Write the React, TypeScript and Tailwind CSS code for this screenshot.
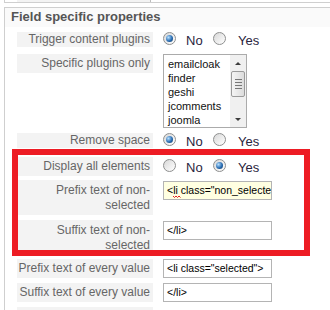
import type { ReactNode } from "react";

function Radio({ checked }: { checked?: boolean }) {
  return (
    <span className="relative inline-flex h-[13px] w-[13px] shrink-0 items-center justify-center rounded-full border border-[#8e8f8f] bg-[linear-gradient(135deg,#d8d8d8,#ffffff)]">
      {checked ? (
        <span className="h-[7px] w-[7px] rounded-full bg-[radial-gradient(circle_at_35%_35%,#b6e0ff,#2a6db3_55%,#0d355f)]" />
      ) : null}
    </span>
  );
}

function RadioPair({ value, bare }: { value: "no" | "yes"; bare?: boolean }) {
  return (
    <div className="flex h-[15px] items-center text-[13px] leading-[15px] text-[#2a2540]">
      <span className="-mt-[3px] flex">
        <Radio checked={value === "no"} />
      </span>
      <span className="ml-[10px] w-[17px] pt-[1px]">{bare ? null : "No"}</span>
      <span className="ml-[10px] -mt-[3px] flex">
        <Radio checked={value === "yes"} />
      </span>
      <span className="ml-[12px] pt-[1px]">{bare ? null : "Yes"}</span>
    </div>
  );
}

function TextBox({ children, focused }: { children: ReactNode; focused?: boolean }) {
  return (
    <div
      className={
        "h-[19px] w-[109px] overflow-hidden whitespace-nowrap border border-[#b4b4b4] pl-[3px] text-[10.5px] leading-[17px] text-black " +
        (focused ? "bg-[#ffffe1]" : "bg-white")
      }
    >
      {children}
    </div>
  );
}

// red spell-check squiggle under a word
function Misspelled({ children }: { children: ReactNode }) {
  return (
    <span className="relative inline-block">
      {children}
      <svg width="8" height="3" viewBox="0 0 8 3" className="absolute left-0 top-[13px]">
        <path d="M0 1 L1.5 2.5 L3 1 L4.5 2.5 L6 1 L7.5 2.5" fill="none" stroke="#e02020" strokeWidth="1" />
      </svg>
    </span>
  );
}

function Row({
  label,
  h,
  mt,
  pt = 0,
  children,
}: {
  label: ReactNode;
  h: number;
  mt: number;
  pt?: number;
  children?: ReactNode;
}) {
  return (
    <div className="flex items-start gap-[10px]" style={{ marginTop: mt }}>
      <div
        className="ml-[12px] w-[136px] shrink-0 bg-[#f3f3f3] pr-[3px] text-right text-[12px] leading-[15px] text-[#666]"
        style={{ height: h, paddingTop: pt }}
      >
        {label}
      </div>
      {children}
    </div>
  );
}

function ListBox() {
  const items = ["emailcloak", "finder", "geshi", "jcomments", "joomla"];
  return (
    <div className="flex h-[74px] w-[84px] border border-[#ababab] bg-white">
      <div className="flex-1 overflow-hidden pl-[4px] pt-[2px] text-[11px] leading-[14px] text-[#111]">
        {items.map((it) => (
          <div key={it}>{it}</div>
        ))}
      </div>
      <div className="flex w-[16px] flex-col items-center bg-[#f0f0f0]">
        <svg width="16" height="16" viewBox="0 0 16 16" className="shrink-0">
          <path d="M5 10 L8 7 L11 10 Z" fill="#3c3c3c" />
        </svg>
        <div className="flex h-[26px] w-[14px] flex-col items-center justify-center gap-[2px] rounded-[2px] border border-[#9a9a9a] bg-[linear-gradient(90deg,#f4f4f4,#dcdcdc)]">
          <span className="h-px w-[7px] bg-[#777]" />
          <span className="h-px w-[7px] bg-[#777]" />
          <span className="h-px w-[7px] bg-[#777]" />
          <span className="h-px w-[7px] bg-[#777]" />
        </div>
        <div className="flex-1" />
        <svg width="16" height="14" viewBox="0 0 16 14" className="shrink-0">
          <path d="M5 5 L11 5 L8 8 Z" fill="#3c3c3c" />
        </svg>
      </div>
    </div>
  );
}

export default function App() {
  return (
    <div className="relative h-[310px] w-[330px] overflow-hidden bg-white font-['Liberation_Sans',Arial,sans-serif]">
      <div className="ml-[4px] flex h-[3px] border-b border-l border-[#cfcfcf]">
        <div className="ml-[12px] h-full w-[134px] border-r border-[#bdbdbd] bg-[#f3f3f3]" />
      </div>
      <div className="ml-[4px] mt-[4px] border-l border-t border-[#cfcfcf] pb-8">
        <div className="h-[19px] bg-[#fafafa] pl-[6px] pt-[1px] text-[13px] font-bold leading-[16px] text-[#555]">
          Field specific properties
        </div>

        <Row label="Trigger content plugins" h={15} mt={5}>
          <RadioPair value="no" />
        </Row>

        <Row label="Specific plugins only" h={19} mt={7} pt={2}>
          <ListBox />
        </Row>

        <Row label="Remove space" h={15} mt={5}>
          <RadioPair value="no" />
        </Row>

        <Row label="Display all elements" h={19} mt={9} pt={2}>
          <div className="pt-[2px]">
            <RadioPair value="yes" />
          </div>
        </Row>

        <Row
          label={
            <>
              Prefix text of non-
              <br />
              selected
            </>
          }
          h={35}
          mt={4}
          pt={3}
        >
          <div className="mt-[1px]">
            <TextBox focused>
              &lt;<Misspelled>li</Misspelled> class="non_selecte
            </TextBox>
          </div>
        </Row>

        <Row
          label={
            <>
              Suffix text of non-
              <br />
              selected
            </>
          }
          h={34}
          mt={5}
          pt={3}
        >
          <div className="mt-[1px]">
            <TextBox>&lt;/li&gt;</TextBox>
          </div>
        </Row>

        <Row label="Prefix text of every value" h={19} mt={5} pt={2}>
          <TextBox>&lt;li class="selected"&gt;</TextBox>
        </Row>

        <Row label="Suffix text of every value" h={19} mt={5} pt={2}>
          <TextBox>&lt;/li&gt;</TextBox>
        </Row>

        <Row label="" h={19} mt={5}>
          <div className="pt-[4px]">
            <RadioPair value="no" bare />
          </div>
        </Row>
      </div>

      <div className="pointer-events-none absolute left-[12px] top-[149px] h-[107px] w-[298px] border-[6px] border-[#ed1c24]" />
    </div>
  );
}
